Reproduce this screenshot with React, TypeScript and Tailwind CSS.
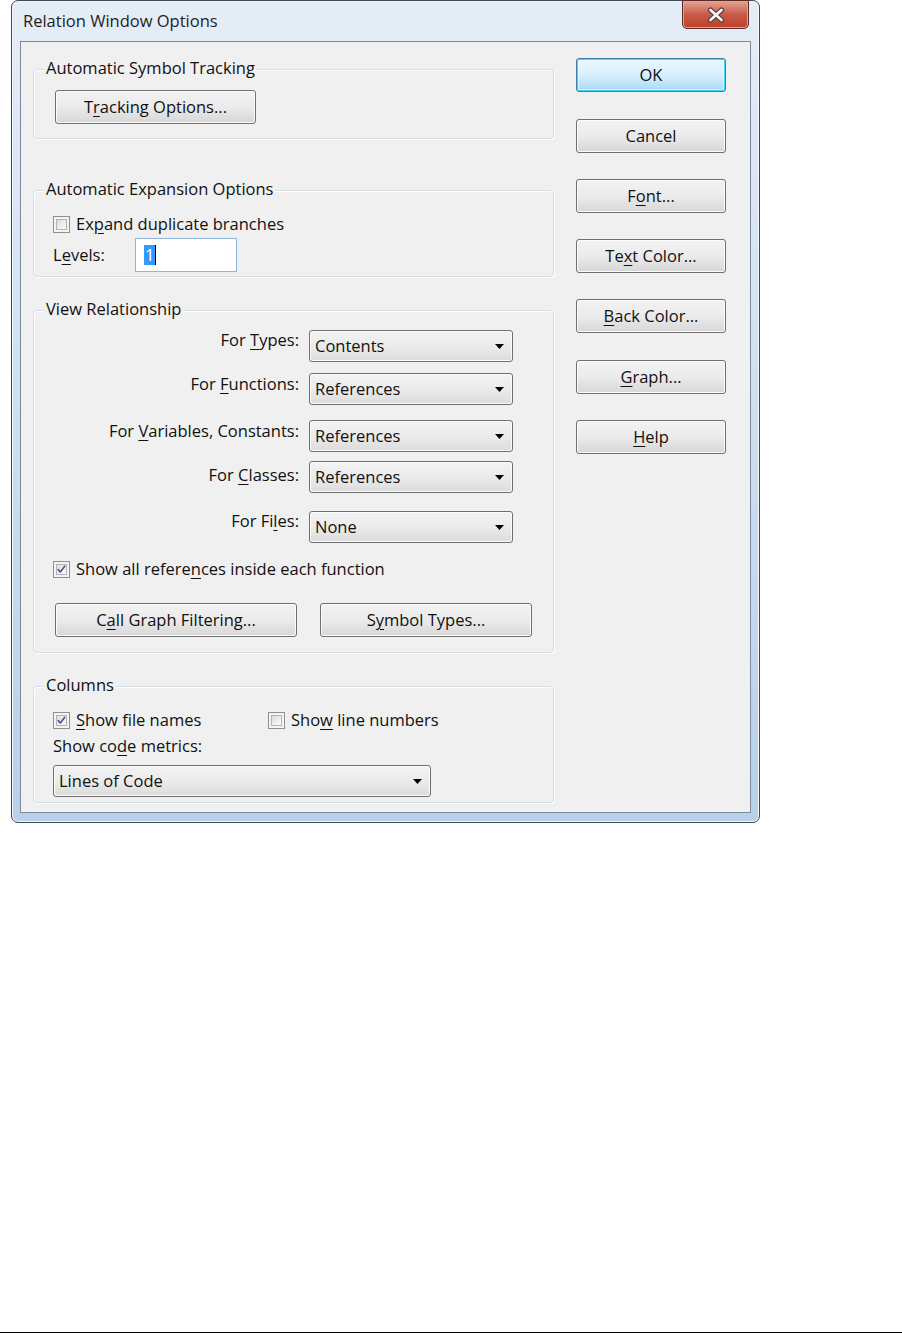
import React from "react";

const U = ({ children }: { children: React.ReactNode }) => (
  <span className="underline underline-offset-[3px] decoration-[1px]">{children}</span>
);

function Btn({
  children,
  className = "",
  focused = false,
}: {
  children: React.ReactNode;
  className?: string;
  focused?: boolean;
}) {
  return (
    <div
      className={
        "h-[34px] rounded-[3px] border flex items-center justify-center text-[16.5px] leading-[20px] text-[#111] " +
        (focused
          ? "border-[#3c7fb1] bg-gradient-to-b from-[#eaf6fd] via-[#d9f0fc] to-[#a7d9f5] shadow-[inset_0_0_0_1px_#48d0f8,inset_0_0_0_2px_#ffffff80] "
          : "border-[#707070] bg-gradient-to-b from-[#f2f2f2] via-[#ebebeb] to-[#d7d7d7] shadow-[inset_0_0_0_1px_#fcfcfc] ") +
        className
      }
    >
      {children}
    </div>
  );
}

function Select({ value, className = "" }: { value: string; className?: string }) {
  return (
    <div
      className={
        "h-[32px] rounded-[3px] border border-[#707070] bg-gradient-to-b from-[#f3f3f3] via-[#ebebeb] to-[#dcdcdc] shadow-[inset_0_0_0_1px_#fbfbfb] flex items-center pl-[5px] pr-[8px] text-[16.5px] text-[#111] " +
        className
      }
    >
      <span className="flex-1">{value}</span>
      <svg width="9" height="5" viewBox="0 0 9 5">
        <path d="M0 0 H9 L4.5 5 Z" fill="#000" />
      </svg>
    </div>
  );
}

function Check({ checked = false }: { checked?: boolean }) {
  return (
    <div className="w-[17px] h-[17px] border border-[#8e8f8f] bg-[#f4f4f4] p-[2px] shrink-0">
      <div className="w-full h-full border border-[#b4b4b4] bg-gradient-to-br from-[#dcdcdc] to-[#fbfbfb] flex items-center justify-center">
        {checked && (
          <svg width="11" height="11" viewBox="0 0 11 11">
            <path
              d="M1.5 5.5 L4 8.5 L9.5 1.5"
              fill="none"
              stroke="#3a4f96"
              strokeWidth="1.8"
              strokeLinecap="round"
              strokeLinejoin="round"
            />
          </svg>
        )}
      </div>
    </div>
  );
}

function Group({
  label,
  className = "",
  children,
}: {
  label: string;
  className?: string;
  children?: React.ReactNode;
}) {
  return (
    <div
      className={
        "relative border border-[#d5dfe5] rounded-[4px] shadow-[inset_1px_1px_0_#ffffff,1px_1px_0_#ffffff] " +
        className
      }
    >
      <div className="absolute -top-[12px] left-[10px] px-[2px] bg-[#f0f0f0] text-[16.5px] leading-[20px] text-[#111]">
        {label}
      </div>
      {children}
    </div>
  );
}

export default function App() {
  return (
    <div
      className="w-[902px] h-[1333px] bg-white flex flex-col text-[#111]"
      style={{ fontFamily: "'Open Sans', 'Noto Sans', sans-serif" }}
    >
      {/* Window */}
      <div className="relative ml-[11px] w-[749px] h-[823px] rounded-[7px] border border-[#3f4a55] bg-gradient-to-b from-[#e5edf7] via-[#cfdff0] to-[#b9d0ea] shadow-[inset_0_0_0_1px_#f3f7fc] flex flex-col px-[8px] pb-[9px]">
        {/* Title bar */}
        <div className="h-[40px] flex items-center pl-[3px] text-[16.5px] text-[#1e1e1e]">
          Relation Window Options
        </div>
        {/* Close button */}
        <div className="absolute -top-px right-[10px] w-[67px] h-[29px] rounded-b-[5px] border border-[#5a2a24] bg-gradient-to-b from-[#e3a393] via-[#c95a49] to-[#bf3e27] shadow-[inset_0_0_0_1px_#e9a090] flex items-center justify-center">
          <svg width="20" height="16" viewBox="0 0 20 16">
            <path
              d="M4.5 3 L15.5 13 M15.5 3 L4.5 13"
              stroke="#4a3a3a"
              strokeWidth="5"
              strokeLinecap="round"
            />
            <path
              d="M4.5 3 L15.5 13 M15.5 3 L4.5 13"
              stroke="#f4f4f4"
              strokeWidth="2.8"
              strokeLinecap="round"
            />
          </svg>
        </div>
        {/* Client area */}
        <div className="flex-1 border border-[#7d8a98] bg-[#f0f0f0] flex pl-[12px]">
          {/* Left column */}
          <div className="w-[521px] pt-[27px] flex flex-col">
            <Group label="Automatic Symbol Tracking" className="h-[70px] pl-[21px] pt-[20px]">
              <Btn className="w-[201px]">
                T<U>r</U>acking Options...
              </Btn>
            </Group>

            <Group label="Automatic Expansion Options" className="mt-[51px] h-[87px] pl-[19px] pt-[25px]">
              <div className="flex items-center h-[17px] text-[16.5px]">
                <Check />
                <span className="ml-[6px]">
                  Ex<U>p</U>and duplicate branches
                </span>
              </div>
              <div className="flex items-center mt-[5px] h-[34px] text-[16.5px]">
                <span className="w-[82px]">
                  L<U>e</U>vels:
                </span>
                <div className="w-[102px] h-[34px] border border-[#8fb4dd] bg-white flex items-center pl-[8px]">
                  <span className="bg-[#3399ff] text-white leading-[20px] px-[1px]">1</span>
                  <span className="w-px h-[20px] bg-black" />
                </div>
              </div>
            </Group>

            <Group label="View Relationship" className="mt-[33px] h-[343px] pt-[19px]">
              <div className="flex items-start">
                <span className="w-[265px] text-right text-[16.5px] leading-[20px]">
                  For <U>T</U>ypes:
                </span>
                <Select value="Contents" className="ml-[10px] w-[204px]" />
              </div>
              <div className="flex items-start mt-[11px]">
                <span className="w-[265px] text-right text-[16.5px] leading-[20px] mt-[1px]">
                  For <U>F</U>unctions:
                </span>
                <Select value="References" className="ml-[10px] w-[204px]" />
              </div>
              <div className="flex items-start mt-[15px]">
                <span className="w-[265px] text-right text-[16.5px] leading-[20px] mt-[1px]">
                  For <U>V</U>ariables, Constants:
                </span>
                <Select value="References" className="ml-[10px] w-[204px]" />
              </div>
              <div className="flex items-start mt-[9px]">
                <span className="w-[265px] text-right text-[16.5px] leading-[20px] mt-[4px]">
                  For <U>C</U>lasses:
                </span>
                <Select value="References" className="ml-[10px] w-[204px]" />
              </div>
              <div className="flex items-start mt-[18px]">
                <span className="w-[265px] text-right text-[16.5px] leading-[20px]">
                  For Fi<U>l</U>es:
                </span>
                <Select value="None" className="ml-[10px] w-[204px]" />
              </div>
              <div className="flex items-center h-[17px] mt-[18px] pl-[19px] text-[16.5px]">
                <Check checked />
                <span className="ml-[6px]">
                  Show all refere<U>n</U>ces inside each function
                </span>
              </div>
              <div className="flex mt-[25px] pl-[21px]">
                <Btn className="w-[242px]">
                  C<U>a</U>ll Graph Filtering...
                </Btn>
                <Btn className="w-[212px] ml-[23px]">
                  S<U>y</U>mbol Types...
                </Btn>
              </div>
            </Group>

            <Group label="Columns" className="mt-[33px] h-[117px] pl-[19px] pt-[25px]">
              <div className="flex items-center h-[17px] text-[16.5px]">
                <Check checked />
                <span className="ml-[6px] w-[192px]">
                  <U>S</U>how file names
                </span>
                <Check />
                <span className="ml-[6px]">
                  Sho<U>w</U> line numbers
                </span>
              </div>
              <div className="mt-[7px] text-[16.5px] leading-[20px]">
                Show co<U>d</U>e metrics:
              </div>
              <Select value="Lines of Code" className="mt-[9px] w-[378px]" />
            </Group>
          </div>

          {/* Right column */}
          <div className="ml-[22px] w-[150px] pt-[16px] flex flex-col">
            <Btn focused>OK</Btn>
            <Btn className="mt-[27px]">Cancel</Btn>
            <Btn className="mt-[26px]">
              F<U>o</U>nt...
            </Btn>
            <Btn className="mt-[26px]">
              Te<U>x</U>t Color...
            </Btn>
            <Btn className="mt-[26px]">
              <U>B</U>ack Color...
            </Btn>
            <Btn className="mt-[27px]">
              <U>G</U>raph...
            </Btn>
            <Btn className="mt-[26px]">
              <U>H</U>elp
            </Btn>
          </div>
        </div>
      </div>

      <div className="mt-auto h-px bg-black" />
    </div>
  );
}
